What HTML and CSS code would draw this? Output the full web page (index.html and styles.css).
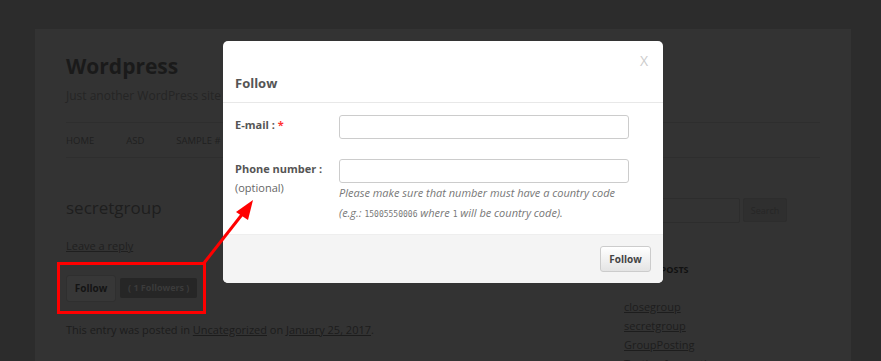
FILE: index.html
```html
<!DOCTYPE html>
<html lang="en">
<head>
  <meta charset="UTF-8" />
  <meta name="viewport" content="width=device-width, initial-scale=1.0" />
  <title>secretgroup | Wordpress</title>
  <link rel="stylesheet" href="styles.css">
</head>
<body>

<div class="site">
  <header class="site-header">
    <h1 class="site-title">Wordpress</h1>
    <p class="site-desc">Just another WordPress site</p>
    <nav class="main-nav">
      <a href="#">Home</a>
      <a href="#">asd</a>
      <a href="#">Sample #</a>
    </nav>
  </header>

  <div class="columns">
    <main class="content">
      <h2 class="entry-title">secretgroup</h2>
      <a class="reply" href="#">Leave a reply</a>
      <div class="follow-row">
        <button class="page-follow" type="button">Follow</button>
        <span class="followers">( 1 Followers )</span>
      </div>
      <p class="entry-meta">This entry was posted in <a href="#">Uncategorized</a> on <a href="#">January 25, 2017</a>.</p>
    </main>

    <aside class="sidebar">
      <form class="search">
        <input type="text" />
        <button type="button">Search</button>
      </form>
      <h3 class="widget-title">Recent Posts</h3>
      <ul class="recent">
        <li><a href="#">closegroup</a></li>
        <li><a href="#">secretgroup</a></li>
        <li><a href="#">GroupPosting</a></li>
        <li><a href="#">Testing for posting</a></li>
      </ul>
    </aside>
  </div>
</div>

<div class="modal">
  <div class="modal-head">
    <span class="close">X</span>
    <h3>Follow</h3>
  </div>
  <div class="modal-body">
    <div class="field">
      <label>E-mail : <span class="req">*</span></label>
      <div class="control">
        <input type="text" />
      </div>
    </div>
    <div class="field">
      <label>Phone number :<span class="opt">(optional)</span></label>
      <div class="control">
        <input type="text" />
        <p class="help">Please make sure that number must have a country code<br>(e.g.: <code>15005550006</code> where <code>1</code> will be country code).</p>
      </div>
    </div>
  </div>
  <div class="modal-foot">
    <button type="button">Follow</button>
  </div>
</div>

<!-- callout drawn on top of the screenshot -->
<div class="callout"></div>
<svg class="arrow" width="881" height="361" viewBox="0 0 881 361">
  <line x1="204" y1="263" x2="244" y2="212" stroke="#ff0000" stroke-width="3" />
  <polygon points="253,200 236,212 248,220" fill="#ff0000" />
</svg>

</body>
</html>
```

FILE: styles.css
```css
body {
  font-family: 'Open Sans', 'Noto Sans', sans-serif;
  background: #2c2c2c;
  margin: 0;
  padding: 0;
  height: 361px;
  overflow: hidden;
}
a {
  color: inherit;
}
.site {
  margin: 29px 0 0 35px;
  width: 816px;
  height: 400px;
  background: #333;
  padding: 22px 0 0 31px;
  box-sizing: border-box;
}
.site-title {
  margin: 0;
  font-size: 21px;
  font-weight: 700;
  color: #1a1a1a;
  line-height: 30px;
}
.site-desc {
  margin: 6px 0 0;
  font-size: 12px;
  color: #252525;
  line-height: 18px;
}
.main-nav {
  margin: 17px 31px 0 0;
  border-top: 1px solid #2e2e2e;
  border-bottom: 1px solid #2e2e2e;
  height: 34px;
  display: flex;
  align-items: center;
  gap: 32px;
}
.main-nav a {
  text-decoration: none;
  text-transform: uppercase;
  font-size: 9.5px;
  color: #202020;
}
.columns {
  display: flex;
  margin-right: 31px;
}
.content {
  flex: 1;
}
.entry-title {
  margin: 37px 0 0;
  font-size: 17px;
  font-weight: 400;
  color: #1e1e1e;
  line-height: 26px;
}
.reply {
  display: inline-block;
  margin-top: 17px;
  font-size: 11px;
  color: #1f1f1f;
}
.follow-row {
  display: flex;
  align-items: center;
  gap: 4px;
  margin-top: 20px;
  height: 26px;
}
.page-follow {
  font-family: inherit;
  font-size: 10px;
  font-weight: 700;
  color: #141414;
  background: #373737;
  border: 1px solid #2f2f2f;
  border-radius: 3px;
  height: 27px;
  width: 50px;
  padding: 0;
}
.followers {
  background: #262626;
  color: #3b3b3b;
  font-size: 9px;
  font-weight: 700;
  border-radius: 2px;
  padding: 3px 8px;
  line-height: 14px;
}
.entry-meta {
  margin: 21px 0 0;
  font-size: 11px;
  color: #1c1c1c;
}
.sidebar {
  width: 196px;
  padding-top: 40px;
}
.search {
  display: flex;
  gap: 3px;
  margin-left: -44px;
}
.search input {
  width: 160px;
  height: 25px;
  box-sizing: border-box;
  background: #333;
  border: 1px solid #2d2d2d;
  border-radius: 2px;
}
.search button {
  font-family: inherit;
  width: 44px;
  height: 24px;
  font-size: 9px;
  color: #262626;
  background: #2f2f2f;
  border: 1px solid #2d2d2d;
  border-radius: 2px;
  padding: 0;
}
.widget-title {
  margin: 40px 0 0;
  font-size: 9px;
  font-weight: 700;
  text-transform: uppercase;
  color: #111;
}
.recent {
  list-style: none;
  margin: 21px 0 0;
  padding: 0;
  font-size: 11px;
  line-height: 19px;
  color: #1d1d1d;
}
.modal {
  position: absolute;
  left: 223px;
  top: 41px;
  width: 440px;
  background: #fff;
  border-radius: 5px;
  overflow: hidden;
}
.modal-head {
  height: 61px;
  border-bottom: 1px solid #e8e8e8;
  padding: 0 12px;
  position: relative;
}
.modal-head h3 {
  margin: 0;
  padding-top: 32px;
  font-size: 13px;
  font-weight: 700;
  color: #555;
  line-height: 20px;
}
.close {
  position: absolute;
  right: 15px;
  top: 10px;
  font-size: 14px;
  color: #ccc;
}
.modal-body {
  padding: 12px 12px 10px;
}
.field {
  display: flex;
}
.field + .field {
  margin-top: 20px;
}
.field label {
  width: 104px;
  font-size: 11px;
  font-weight: 700;
  color: #555;
  line-height: 19px;
}
.req {
  color: #ff3333;
}
.opt {
  display: block;
  font-weight: 400;
  color: #666;
}
.control input {
  display: block;
  width: 290px;
  height: 24px;
  box-sizing: border-box;
  border: 1px solid #ccc;
  border-radius: 3px;
  margin: 0;
}
.help {
  margin: 0;
  font-size: 11px;
  font-style: italic;
  color: #777;
  line-height: 19.5px;
}
.help code {
  font-family: 'DejaVu Sans Mono', monospace;
  font-style: normal;
  font-size: 8px;
}
.modal-foot {
  height: 49px;
  background: #f4f4f4;
  border-top: 1px solid #eee;
  display: flex;
  align-items: center;
  justify-content: flex-end;
  padding-right: 12px;
  box-sizing: border-box;
}
.modal-foot button {
  font-family: inherit;
  font-size: 10px;
  font-weight: 700;
  color: #444;
  background: linear-gradient(#fff, #e4e4e4);
  border: 1px solid #ccc;
  border-radius: 3px;
  width: 51px;
  height: 26px;
  padding: 0;
}
.callout {
  position: absolute;
  left: 57px;
  top: 262px;
  width: 143px;
  height: 46px;
  border: 3px solid #ff0000;
}
.arrow {
  position: absolute;
  left: 0;
  top: 0;
  pointer-events: none;
}
```
